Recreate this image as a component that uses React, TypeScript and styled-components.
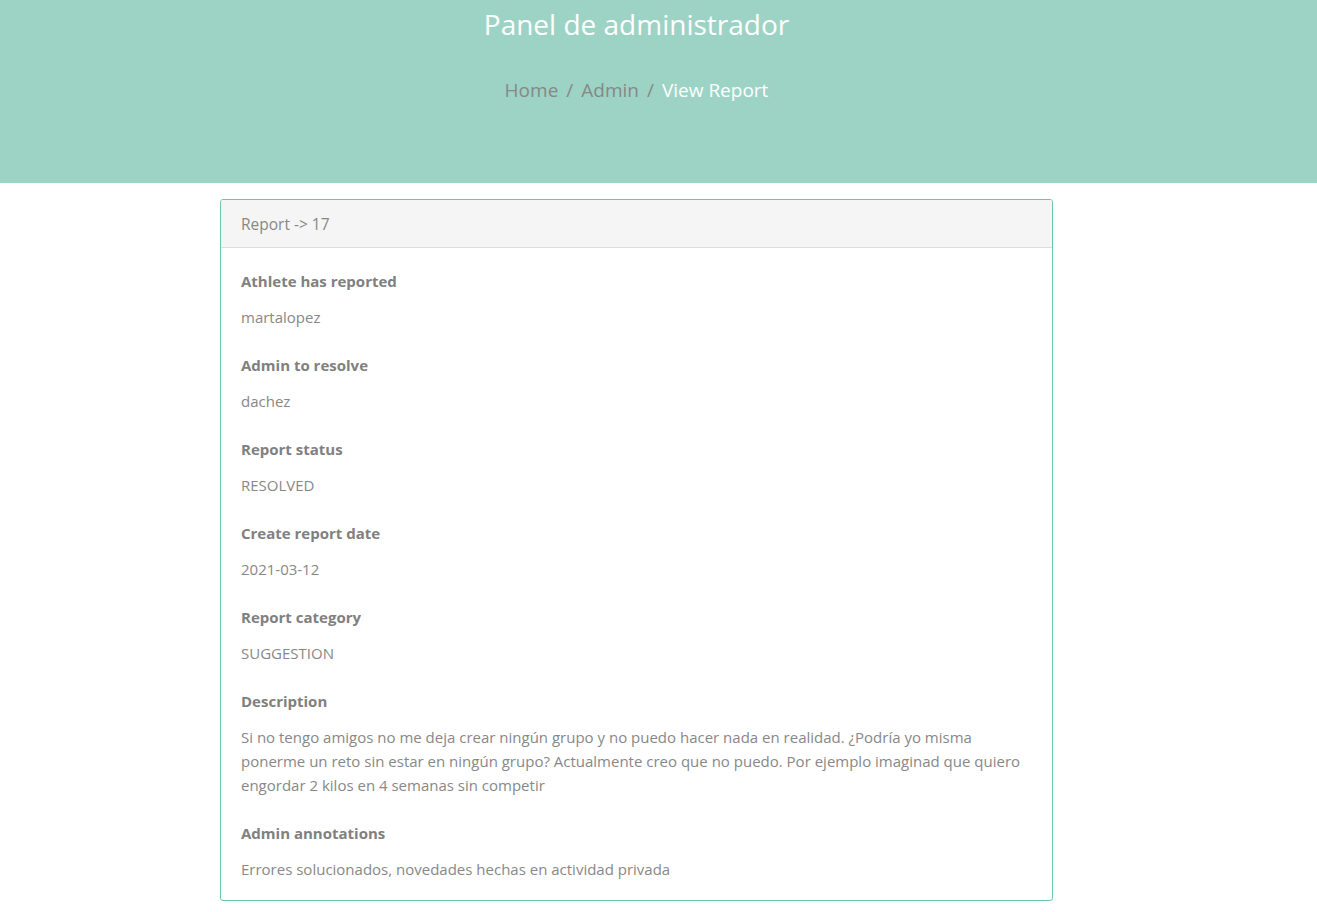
import React from "react";
import styled, { createGlobalStyle } from "styled-components";

const Global = createGlobalStyle`
  html, body { margin: 0; padding: 0; background: #fff; }
  body { font-family: "Open Sans", "Noto Sans", sans-serif; color: #858585; }
  * { box-sizing: border-box; }
`;

const Hero = styled.header`
  height: 183px;
  background: #9dd3c5;
  display: flex;
  flex-direction: column;
  align-items: center;
  padding-right: 44px;
`;

const Title = styled.h1`
  margin: 4px 0 0;
  font-size: 28px;
  font-weight: 400;
  line-height: 40px;
  color: #fff;
`;

const Crumbs = styled.nav`
  margin-top: 32px;
  display: flex;
  align-items: center;
  font-size: 19px;
  line-height: 28px;
`;

const Crumb = styled.span<{ $active?: boolean }>`
  color: ${(p) => (p.$active ? "#fff" : "#868886")};
`;

const Sep = styled.span`
  color: #868886;
  padding: 0 8px;
`;

const Main = styled.main`
  display: flex;
  justify-content: center;
  padding: 16px 44px 10px 0;
`;

const Card = styled.section`
  width: 833px;
  border: 1px solid #6fc5a8;
  border-radius: 3px;
  overflow: hidden;
`;

const CardHeader = styled.div`
  height: 48px;
  background: #f5f5f5;
  border-bottom: 1px solid #dddddd;
  padding: 0 20px;
  display: flex;
  align-items: center;
  font-size: 15.5px;
  color: #888888;
`;

const CardBody = styled.div`
  padding: 21px 20px 19px;
`;

const Field = styled.div`
  margin-bottom: 24px;
  &:last-child { margin-bottom: 0; }
`;

const Label = styled.div`
  font-size: 15px;
  font-weight: 700;
  line-height: 24px;
  color: #808080;
  margin-bottom: 12px;
`;

const Value = styled.div`
  font-size: 15px;
  line-height: 24px;
  color: #888888;
`;

const fields: [string, string][] = [
  ["Athlete has reported", "martalopez"],
  ["Admin to resolve", "dachez"],
  ["Report status", "RESOLVED"],
  ["Create report date", "2021-03-12"],
  ["Report category", "SUGGESTION"],
  [
    "Description",
    "Si no tengo amigos no me deja crear ningún grupo y no puedo hacer nada en realidad. ¿Podría yo misma ponerme un reto sin estar en ningún grupo? Actualmente creo que no puedo. Por ejemplo imaginad que quiero engordar 2 kilos en 4 semanas sin competir",
  ],
  ["Admin annotations", "Errores solucionados, novedades hechas en actividad privada"],
];

export default function App() {
  return (
    <>
      <Global />
      <Hero>
        <Title>Panel de administrador</Title>
        <Crumbs>
          <Crumb>Home</Crumb>
          <Sep>/</Sep>
          <Crumb>Admin</Crumb>
          <Sep>/</Sep>
          <Crumb $active>View Report</Crumb>
        </Crumbs>
      </Hero>
      <Main>
        <Card>
          <CardHeader>Report -&gt; 17</CardHeader>
          <CardBody>
            {fields.map(([l, v]) => (
              <Field key={l}>
                <Label>{l}</Label>
                <Value>{v}</Value>
              </Field>
            ))}
          </CardBody>
        </Card>
      </Main>
    </>
  );
}
